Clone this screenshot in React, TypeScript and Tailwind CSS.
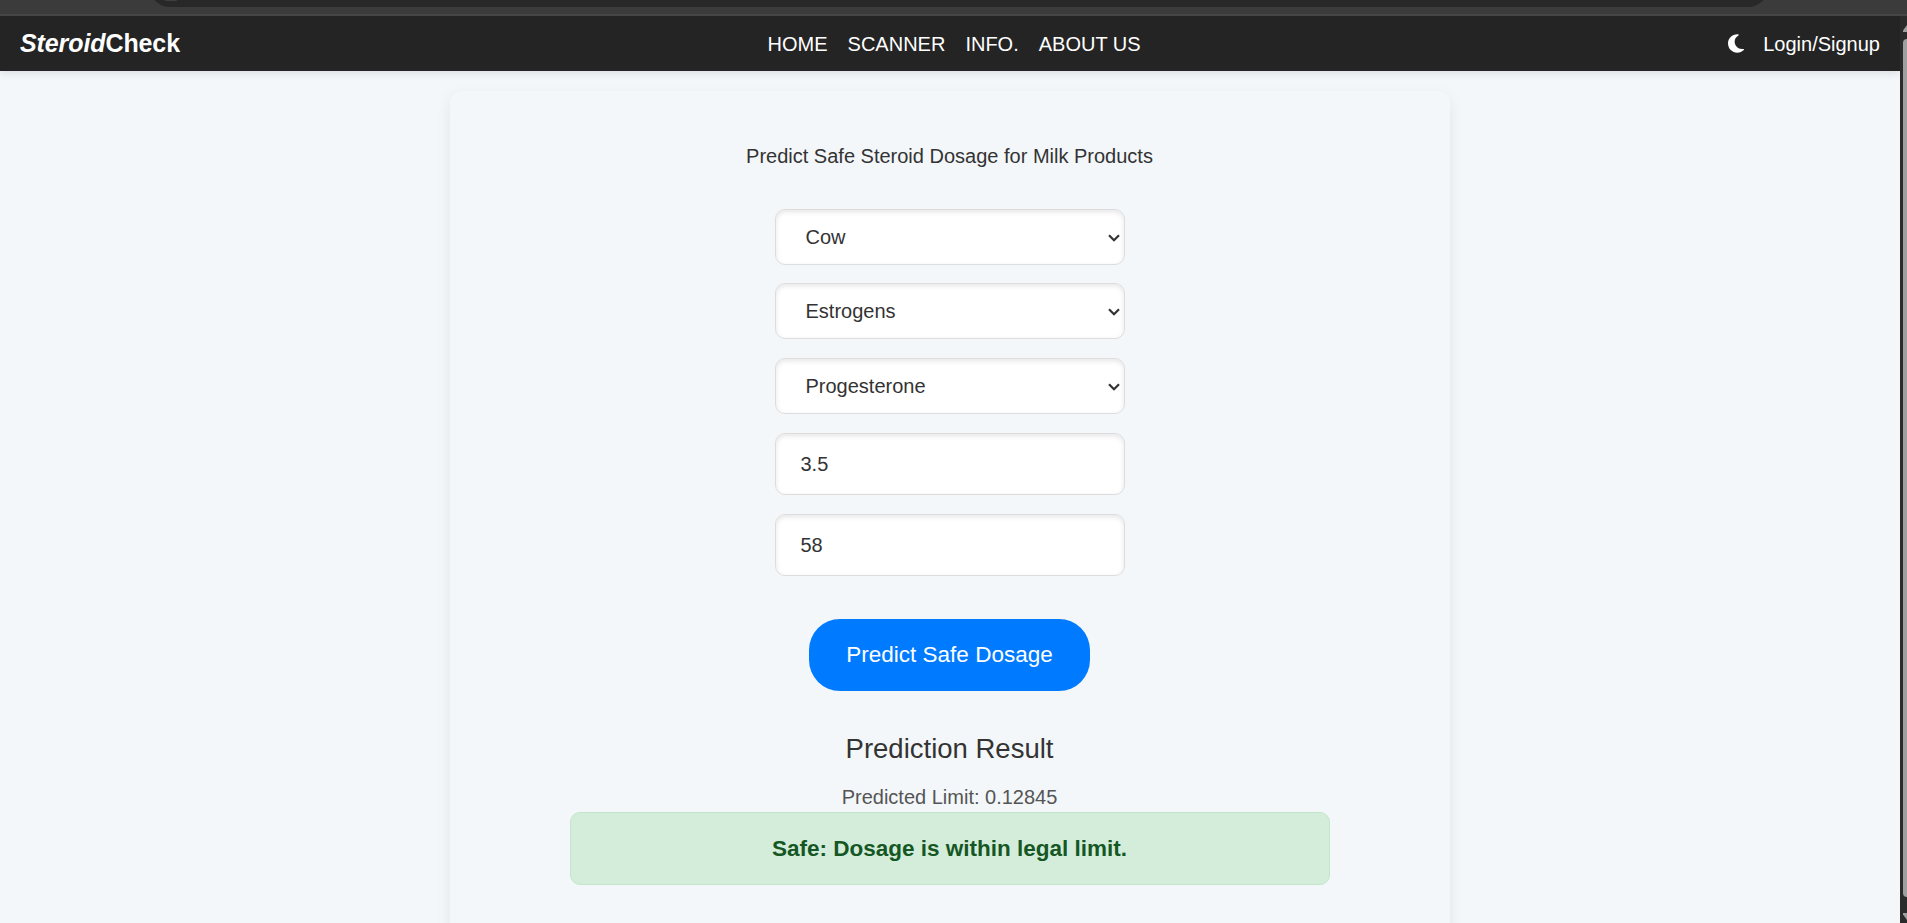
import { useState } from "react";

const navLinks = ["HOME", "SCANNER", "INFO.", "ABOUT US"];

function BrowserEdge() {
  return (
    <div className="h-4 border-b-2 border-[#464646] bg-[#3b3b3b]">
      <div className="flex h-[7px] items-end overflow-hidden pl-[149px]">
        <div className="flex h-[42px] w-[1620px] shrink-0 flex-col rounded-[21px] bg-[#282828] pt-[35px] pl-4">
          <div className="h-px w-3 rounded-b-full bg-[#3f3f3f]" />
        </div>
      </div>
    </div>
  );
}

function Moon() {
  return (
    <svg viewBox="0 0 384 512" className="-mr-px h-[21px] w-[16px]" preserveAspectRatio="none" fill="#fff">
      <path d="M223.5 32C100 32 0 132.3 0 256S100 480 223.5 480c60.6 0 115.5-24.2 155.8-63.4c5-4.9 6.3-12.5 3.1-18.7s-10.1-9.7-17-8.5c-9.8 1.7-19.8 2.6-30.1 2.6c-96.9 0-175.5-78.8-175.5-176c0-65.8 36-123.1 89.3-153.3c6.1-3.5 9.2-10.5 7.7-17.3s-7.3-11.9-14.3-12.5c-6.3-.5-12.6-.8-19-.8z" />
    </svg>
  );
}

function Navbar() {
  return (
    <nav className="relative z-10 flex h-[55px] items-center justify-between bg-[#242424] px-5 text-white shadow-[0_2px_8px_rgba(30,0,20,0.11)]">
      <div className="text-[25px] leading-none font-bold tracking-[-0.1px]">
        <i>Steroid</i>Check
      </div>
      <ul className="flex gap-5 text-[20px] leading-none">
        {navLinks.map((l) => (
          <li key={l}>{l}</li>
        ))}
      </ul>
      <div className="flex items-center gap-5 text-[20px] leading-none">
        <Moon />
        <span>Login/Signup</span>
      </div>
    </nav>
  );
}

function SelectField({ value, options }: { value: string; options: string[] }) {
  const [v, setV] = useState(value);
  return (
    <div className="grid h-14 w-[350px]">
      <select
        value={v}
        onChange={(e) => setV(e.target.value)}
        className="col-start-1 row-start-1 appearance-none rounded-[10px] border border-[#ddd] bg-white pl-[29.5px] text-[20px] text-[#333] shadow-[inset_0_2px_5px_rgba(0,0,0,0.1)]"
      >
        {options.map((o) => (
          <option key={o}>{o}</option>
        ))}
      </select>
      <svg viewBox="0 0 12 8" className="pointer-events-none col-start-1 row-start-1 mt-[2px] mr-[5px] h-2 w-3 self-center justify-self-end" fill="none" stroke="#333" strokeWidth="2.2">
        <path d="M1 1.3 6 6.3 11 1.3" />
      </svg>
    </div>
  );
}

function NumberField({ value }: { value: string }) {
  return (
    <input
      defaultValue={value}
      className="h-[62px] w-[350px] rounded-[10px] border border-[#ddd] bg-white px-[24.5px] text-[20px] text-[#333] shadow-[inset_0_2px_5px_rgba(0,0,0,0.1)]"
    />
  );
}

function PredictCard() {
  return (
    <main className="mx-auto mt-5 flex h-[900px] w-[1000px] flex-col items-center rounded-[12px] bg-[#f3f7fa] pt-[50px] text-[#333] shadow-[0_5px_15px_rgba(0,0,0,0.075)]">
      <p className="mr-px text-[20px] leading-[30px]">Predict Safe Steroid Dosage for Milk Products</p>
      <form className="mt-[38px] flex flex-col items-center" onSubmit={(e) => e.preventDefault()}>
        <div className="flex flex-col gap-[19px]">
          <div className="flex flex-col gap-[18px]">
            <SelectField value="Cow" options={["Cow", "Buffalo", "Goat"]} />
            <SelectField value="Estrogens" options={["Estrogens", "Androgens"]} />
          </div>
          <SelectField value="Progesterone" options={["Progesterone", "Testosterone"]} />
          <NumberField value="3.5" />
          <NumberField value="58" />
        </div>
        <button className="mt-[43px] mr-px h-[72px] w-[281px] rounded-[31px] bg-[#007bff] text-[22.5px] text-white">
          Predict Safe Dosage
        </button>
      </form>
      <h2 className="mt-[38px] mr-px text-[27.5px] leading-10">Prediction Result</h2>
      <p className="mt-[13px] mr-px text-[20px] leading-[30px] text-[#555]">Predicted Limit: 0.12845</p>
      <div className="flex h-[73px] w-[760px] items-center justify-center rounded-[10px] border border-[#c3e6cb] bg-[#d4edda] pr-px text-[22.5px] font-bold text-[#155724]">
        Safe: Dosage is within legal limit.
      </div>
    </main>
  );
}

function Scrollbar() {
  return (
    <div className="flex w-[7px] flex-col items-end overflow-hidden bg-[#2b2b2b]">
      <svg viewBox="0 0 4 7" className="mt-[9px] h-[7px] w-1" fill="#9f9f9f">
        <path d="M4 0V7H0V5.5Z" />
      </svg>
      <div className="mt-[7px] h-[858px] w-1 rounded-l-[4px] bg-[#9f9f9f]" />
      <svg viewBox="0 0 4 7" className="mt-4 h-[7px] w-1" fill="#9f9f9f">
        <path d="M4 7V0H0V1.5Z" />
      </svg>
    </div>
  );
}

export default function App() {
  return (
    <div className="flex h-[923px] w-[1907px] flex-col overflow-hidden font-['Liberation_Sans',Arial,sans-serif]">
      <BrowserEdge />
      <div className="flex h-[907px]">
        <div className="w-[1900px] overflow-hidden bg-[#f3f7fa]">
          <Navbar />
          <PredictCard />
        </div>
        <Scrollbar />
      </div>
    </div>
  );
}
